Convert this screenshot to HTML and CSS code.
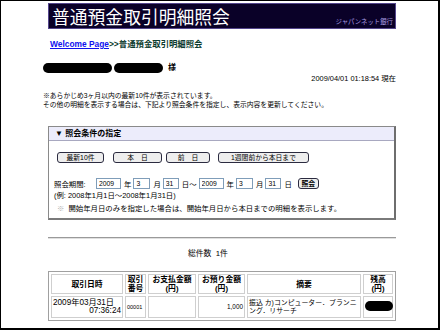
FILE: index.html
```html
<!DOCTYPE html>
<html lang="ja">
<head>
<meta charset="utf-8">
<title>普通預金取引明細照会</title>
<link rel="stylesheet" href="styles.css">
</head>
<body>
<div class="frame">
  <div class="page">
    <div class="titlebar">
      <span class="title">普通預金取引明細照会</span>
      <span class="bank">ジャパンネット銀行</span>
    </div>
    <div class="crumb"><a href="#">Welcome Page</a><span class="here">&gt;&gt;普通預金取引明細照会</span></div>
    <div class="name"><span class="blob b1"></span><span class="blob b2"></span><span class="sama">様</span></div>
    <div class="stamp">2009/04/01 01:18:54 現在</div>
    <div class="notes">
      <p>※あらかじめ3ヶ月以内の最新10件が表示されています。</p>
      <p>その他の明細を表示する場合は、下記より照会条件を指定し、表示内容を更新してください。</p>
    </div>
    <div class="search">
      <div class="search-head">▼ 照会条件の指定</div>
      <div class="search-body">
        <div class="btns">
          <button class="btn b-new">最新10件</button>
          <button class="btn b-today">本　日</button>
          <button class="btn b-prev">前　日</button>
          <button class="btn b-week">1週間前から本日まで</button>
        </div>
        <div class="period">
          <span class="lbl">照会期間:</span>
          <input class="in yr" value="2009"><span class="u">年</span>
          <input class="in mo" value="3"><span class="u">月</span>
          <input class="in dy" value="31"><span class="u">日～</span>
          <input class="in yr" value="2009"><span class="u">年</span>
          <input class="in mo" value="3"><span class="u">月</span>
          <input class="in dy" value="31"><span class="u">日</span>
          <button class="btn go">照会</button>
        </div>
        <div class="example">(例: 2008年1月1日～2008年1月31日)</div>
        <div class="hint"><span class="kome">※</span>開始年月日のみを指定した場合は、開始年月日から本日までの明細を表示します。</div>
      </div>
    </div>
    <div class="rule"></div>
    <div class="total">総件数&nbsp;&nbsp;1件</div>
    <table class="list">
      <colgroup>
        <col class="c1"><col class="c2"><col class="c3"><col class="c4"><col class="c5"><col class="c6">
      </colgroup>
      <thead>
        <tr>
          <th>取引日時</th>
          <th>取引<br>番号</th>
          <th>お支払金額<br>(円)</th>
          <th>お預り金額<br>(円)</th>
          <th>摘要</th>
          <th>残高<br>(円)</th>
        </tr>
      </thead>
      <tbody>
        <tr>
          <td class="dt"><div>2009年03月31日</div><div class="tm">07:36:24</div></td>
          <td class="no">00001</td>
          <td></td>
          <td class="amt">1,000</td>
          <td class="memo">振込 カ)コンピューター．プランニング．リサーチ</td>
          <td class="bal"><span class="blob b3"></span></td>
        </tr>
      </tbody>
    </table>
  </div>
</div>
</body>
</html>
```

FILE: styles.css
```css
* { box-sizing: border-box; }
html, body { margin: 0; padding: 0; background: #fff; }
body {
  font-family: "Liberation Sans", "Noto Sans CJK JP", sans-serif;
  color: #000;
}
.frame {
  width: 440px;
  height: 330px;
  border: 1px solid #000;
  border-right-width: 2px;
  border-bottom-width: 2px;
  overflow: hidden;
  padding: 2px 0 0 47px;
}
.page { width: 348px; }

.titlebar {
  height: 26px;
  background: #0a0128;
  border: 1px solid #54468c;
  display: flex;
  justify-content: space-between;
  align-items: center;
  padding: 0 2px 0 3px;
}
.title {
  color: #fff;
  font-family: "Noto Sans CJK JP", sans-serif;
  font-size: 17.8px;
  line-height: 20px;
  margin-top: -1px;
}
.bank {
  color: #a99ce0;
  font-family: "Noto Sans CJK JP", sans-serif;
  font-size: 6.4px;
  line-height: 8px;
  align-self: flex-end;
  margin-bottom: 2px;
}

.crumb {
  margin-top: 9px;
  padding-left: 2px;
  height: 12px;
  line-height: 12px;
  font-size: 8.4px;
  font-weight: bold;
  white-space: nowrap;
}
.crumb a { color: #1010ee; text-decoration: underline; }
.here { color: #0b3b2e; }

.name {
  margin-top: 13px;
  margin-left: -5px;
  height: 10px;
  display: flex;
  align-items: center;
}
.blob {
  display: inline-block;
  background: #000;
  border-radius: 5px;
  height: 9px;
}
.b1 { width: 69px; height: 10px; }
.b2 { width: 49px; height: 10px; margin-left: 2px; }
.sama { margin-left: 5px; font-size: 8px; font-weight: bold; line-height: 10px; }

.stamp {
  margin-top: 1px;
  text-align: right;
  font-size: 7.4px;
  line-height: 10px;
  height: 10px;
  white-space: nowrap;
}

.notes {
  margin-top: 7px;
  margin-left: -5px;
  font-size: 6.8px;
  line-height: 9px;
  white-space: nowrap;
}
.notes p { margin: 0; }

.search {
  margin-top: 17px;
  border: 1px solid #8a8a8a;
  border-right: 2px solid #6e6e6e;
  border-bottom: 2px solid #7a7a7a;
}
.search-head {
  height: 14px;
  line-height: 13px;
  background: #ececfb;
  border-bottom: 1px solid #a8a8c0;
  padding-left: 6px;
  font-size: 8px;
  font-weight: bold;
}
.search-body {
  padding: 11px 0 5px 5px;
  font-size: 7.4px;
}
.btns { display: flex; height: 11px; padding-left: 3px; }
.btn {
  font-family: "Liberation Sans", "Noto Sans CJK JP", sans-serif;
  font-size: 6.8px;
  height: 11px;
  line-height: 9px;
  padding: 0;
  margin: 0;
  color: #000;
  background: #eeeeee;
  border: 1px solid #2b2b40;
  border-right-width: 1.5px;
  border-bottom-width: 1.5px;
  border-radius: 3px;
}
.b-new { width: 47px; }
.b-today { width: 49px; margin-left: 9px; }
.b-prev { width: 44px; margin-left: 4px; }
.b-week { width: 91px; margin-left: 8px; }

.period {
  margin-top: 15px;
  height: 11px;
  display: flex;
  align-items: center;
  white-space: nowrap;
}
.lbl { width: 42px; }
.in {
  height: 11px;
  padding: 0 0 0 2px;
  margin: 0;
  border: 1px solid #7f9db9;
  font-family: "Liberation Sans", sans-serif;
  font-size: 6.8px;
  line-height: 9px;
  color: #000;
  background: #fff;
}
.yr { width: 25px; }
.mo { width: 17px; }
.dy { width: 16px; }
.u { margin: 0 2px 0 3px; }
.go {
  width: 21px;
  margin-left: 4px;
  font-weight: bold;
}

.example {
  margin-top: 2px;
  line-height: 9px;
  height: 9px;
  white-space: nowrap;
}
.hint {
  margin-top: 4px;
  line-height: 9px;
  height: 9px;
  padding-left: 3px;
  white-space: nowrap;
}
.kome { color: #b0b0b0; margin-right: 4px; }

.rule {
  margin-top: 17px;
  border-top: 1px solid #9a9a9a;
  border-bottom: 1px solid #e0e0e0;
}
.total {
  margin-top: 10px;
  height: 10px;
  line-height: 10px;
  font-size: 7.8px;
  padding-left: 140px;
  white-space: nowrap;
}

.list {
  margin-top: 12px;
  width: 348px;
  table-layout: fixed;
  border-collapse: separate;
  border-spacing: 2px;
  border: 1px solid #a0a0a0;
  font-size: 7.2px;
}
.c1 { width: 72px; }
.c2 { width: 21px; }
.c3 { width: 48px; }
.c4 { width: 47px; }
.c5 { width: 114px; }
.c6 { width: 30px; }
.list th, .list td {
  border: 1px solid #cfcfcf;
  padding: 0 1px;
}
.list th {
  height: 18px;
  font-size: 7.8px;
  font-weight: bold;
  line-height: 9px;
  text-align: center;
  vertical-align: middle;
  white-space: nowrap;
  overflow: hidden;
}
.list td {
  height: 22px;
  line-height: 8px;
  vertical-align: middle;
}
.dt { white-space: nowrap; font-size: 8.2px; line-height: 10.5px; padding: 0 1px 0 0; }
.tm { text-align: right; }
.no { font-size: 5.5px; }
.amt { text-align: right; font-size: 6.4px; }
.memo { font-size: 6.9px; line-height: 9px; }
.bal { padding: 0; text-align: center; }
.b3 { width: 28px; height: 10px; }
```
